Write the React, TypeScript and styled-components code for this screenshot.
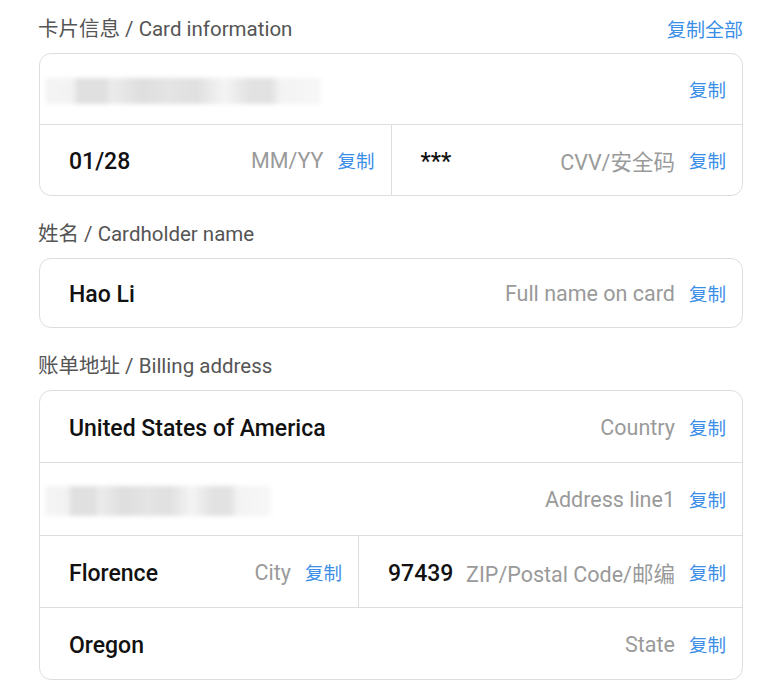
import React from "react";
import styled, { createGlobalStyle } from "styled-components";

const Global = createGlobalStyle`
  *, *::before, *::after { box-sizing: border-box; }
  html, body { margin: 0; padding: 0; background: #fff; }
  body { font-family: Roboto, "Noto Sans CJK SC", sans-serif; }
`;

const Page = styled.div`
  width: 704px;
  margin-left: 39px;
  padding-top: 17px;
`;

const Header = styled.div<{ $first?: boolean }>`
  display: flex;
  justify-content: space-between;
  align-items: center;
  height: 20px;
  margin-top: ${(p) => (p.$first ? "0" : "26px")};
  margin-bottom: 16px;
`;

const Title = styled.div`
  font-size: 20.5px;
  color: #555;
  margin-left: -1px;
`;

const CopyAll = styled.button`
  border: none;
  background: none;
  padding: 0;
  margin-top: 3px;
  font-family: inherit;
  font-size: 19px;
  color: #3a8ee8;
  cursor: pointer;
`;

const Card = styled.div`
  border: 1px solid #dedede;
  border-radius: 12px;
  overflow: hidden;
`;

const Row = styled.div<{ $h?: number }>`
  box-sizing: content-box;
  display: flex;
  height: ${(p) => p.$h ?? 70}px;
  & + & {
    border-top: 1px solid #dedede;
  }
`;

const Cell = styled.div<{ $basis?: string }>`
  display: flex;
  align-items: center;
  flex: ${(p) => (p.$basis ? `0 0 ${p.$basis}` : "1 1 0")};
  min-width: 0;
  padding: 0 16px 0 29px;
  & + & {
    border-left: 1px solid #dedede;
  }
`;

const Value = styled.div`
  flex: 1;
  font-size: 23px;
  font-weight: 500;
  color: #111;
  white-space: nowrap;
  margin: 3px 8px 0 0;
`;

const Label = styled.div`
  font-size: 21.5px;
  color: #9a9a9a;
  margin: 1px 14px 0 0;
  white-space: nowrap;
`;

const Copy = styled.button`
  border: none;
  background: none;
  padding: 0;
  font-family: inherit;
  font-size: 18.5px;
  color: #3a8ee8;
  cursor: pointer;
  white-space: nowrap;
`;

const Redacted = styled.div<{ $w: number; $h: number }>`
  width: ${(p) => p.$w}px;
  height: ${(p) => p.$h}px;
  margin-left: -24px;
  background: linear-gradient(
    90deg,
    #f5f5f5 0%,
    #f2f2f2 10%,
    #e0e0e0 12%,
    #e0e0e0 22%,
    #ececec 24%,
    #dedede 35%,
    #e4e4e4 45%,
    #e0e0e0 55%,
    #f4f4f4 65%,
    #e2e2e2 74%,
    #e2e2e2 82%,
    #f3f3f3 85%,
    #f7f7f7 100%
  );
  filter: blur(2px);
`;

type Field = { value?: React.ReactNode; label?: string; basis?: string };

const FieldCell = ({ value, label, basis }: Field) => (
  <Cell $basis={basis}>
    <Value>{value}</Value>
    {label && <Label>{label}</Label>}
    <Copy>复制</Copy>
  </Cell>
);

export default function App() {
  return (
    <>
      <Global />
      <Page>
        <Header $first>
          <Title>卡片信息 / Card information</Title>
          <CopyAll>复制全部</CopyAll>
        </Header>
        <Card>
          <Row>
            <FieldCell value={<Redacted $w={276} $h={26} />} />
          </Row>
          <Row>
            <FieldCell value="01/28" label="MM/YY" />
            <FieldCell value="***" label="CVV/安全码" />
          </Row>
        </Card>

        <Header>
          <Title>姓名 / Cardholder name</Title>
        </Header>
        <Card>
          <Row $h={68}>
            <FieldCell value="Hao Li" label="Full name on card" />
          </Row>
        </Card>

        <Header>
          <Title>账单地址 / Billing address</Title>
        </Header>
        <Card>
          <Row $h={71}>
            <FieldCell value="United States of America" label="Country" />
          </Row>
          <Row $h={72}>
            <FieldCell value={<Redacted $w={226} $h={30} />} label="Address line1" />
          </Row>
          <Row $h={71}>
            <FieldCell value="Florence" label="City" basis="318px" />
            <FieldCell value="97439" label="ZIP/Postal Code/邮编" />
          </Row>
          <Row $h={71}>
            <FieldCell value="Oregon" label="State" />
          </Row>
        </Card>
      </Page>
    </>
  );
}
